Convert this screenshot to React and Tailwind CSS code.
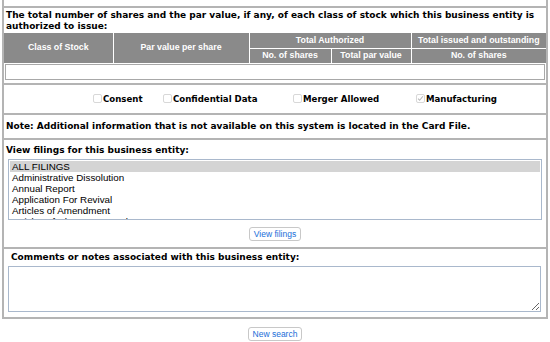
import React from 'react';

const filings = [
  'ALL FILINGS',
  'Administrative Dissolution',
  'Annual Report',
  'Application For Revival',
  'Articles of Amendment',
  'Articles of Charter Surrender',
];

function Box({ checked, label }) {
  return (
    <label className="flex items-center">
      <span className="w-[9px] h-[9px] border border-[#d8d8d8] rounded-[2px] bg-white flex items-center justify-center mr-[1px]">
        {checked && (
          <svg width="7" height="7" viewBox="0 0 8 8" fill="none" stroke="#b8b8b8" strokeWidth="1.2">
            <path d="M1.2 4.2 3 6l3.8-4.6" />
          </svg>
        )}
      </span>
      <span className="font-bold text-[8.6px] whitespace-nowrap">{label}</span>
    </label>
  );
}

export default function App() {
  return (
    <div className="w-[550px] h-[342px] bg-white text-black font-['DejaVu_Sans',sans-serif] overflow-hidden">
      <div className="mx-[2px] border-x-2 border-b-2 border-[#b4b4b4]">
        {/* top strip */}
        <div className="h-[8px] border-b-2 border-[#b4b4b4]"></div>

        {/* shares */}
        <div className="border-b-2 border-[#b4b4b4] pb-[3px]">
          <p className="font-bold text-[9px] leading-[11px] px-[2px] pt-[2px] pb-[1px]">
            The total number of shares and the par value, if any, of each class of stock which this business entity is authorized to issue:
          </p>
          <table className="w-full border-collapse text-white font-bold text-[8.8px] font-['Liberation_Sans',sans-serif]">
            <tbody>
              <tr className="h-[15px]">
                <td rowSpan={2} className="w-[109px] bg-[#8a8a8a] text-center border-r border-white">Class of Stock</td>
                <td rowSpan={2} className="w-[136px] bg-[#8a8a8a] text-center border-r border-white">Par value per share</td>
                <td colSpan={2} className="bg-[#8a8a8a] text-center border-r border-b border-white">Total Authorized</td>
                <td className="bg-[#8a8a8a] text-center border-b border-white">Total issued and outstanding</td>
              </tr>
              <tr className="h-[15px]">
                <td className="w-[82px] bg-[#8a8a8a] text-center border-r border-white">No. of shares</td>
                <td className="w-[80px] bg-[#8a8a8a] text-center border-r border-white">Total par value</td>
                <td className="bg-[#8a8a8a] text-center">No. of shares</td>
              </tr>
            </tbody>
          </table>
          <div className="mx-[1px] mt-[1px] h-[16px] border border-[#a8a8a8]"></div>
        </div>

        {/* checkboxes */}
        <div className="h-[30px] border-b-2 border-[#b4b4b4] flex items-center pl-[89px]">
          <div className="w-[70px]"><Box label="Consent" /></div>
          <div className="w-[130px]"><Box label="Confidential Data" /></div>
          <div className="w-[123px]"><Box label="Merger Allowed" /></div>
          <div><Box checked label="Manufacturing" /></div>
        </div>

        {/* note */}
        <div className="h-[25px] border-b-2 border-[#b4b4b4] flex items-center px-[2px]">
          <p className="font-bold text-[9px] whitespace-nowrap">Note: Additional information that is not available on this system is located in the Card File.</p>
        </div>

        {/* filings */}
        <div className="border-b-2 border-[#b4b4b4] pb-[6px]">
          <p className="font-bold text-[9px] px-[2px] pt-[3px] leading-[14px]">View filings for this business entity:</p>
          <div className="mx-[4px] mt-[2px] h-[61px] border border-[#a9b8cc] overflow-hidden px-[1px] pt-[1px]">
            {filings.map((f, i) => (
              <div key={f} className={`font-['Liberation_Sans',sans-serif] text-[9.8px] leading-[11px] px-[2px] whitespace-nowrap ${i === 0 ? 'bg-[#d4d4d4]' : ''}`}>{f}</div>
            ))}
          </div>
          <div className="flex justify-center mt-[7px]">
            <button className="h-[14px] px-[4px] rounded-[3px] border border-[#c8c8c8] bg-white text-[#1a6ed8] text-[8.5px] font-['Liberation_Sans',sans-serif] leading-none">View filings</button>
          </div>
        </div>

        {/* comments */}
        <div className="pb-[5px]">
          <p className="font-bold text-[9px] px-[7px] pt-[1px] leading-[14px]">Comments or notes associated with this business entity:</p>
          <textarea className="block mx-[4px] mt-[2px] w-[533px] h-[46px] border border-[#a9b8cc] resize-y outline-none"></textarea>
        </div>
      </div>

      <div className="flex justify-center mt-[8px]">
        <button className="h-[14px] px-[4px] rounded-[3px] border border-[#c8c8c8] bg-white text-[#1a6ed8] text-[8.5px] font-['Liberation_Sans',sans-serif] leading-none">New search</button>
      </div>
    </div>
  );
}
